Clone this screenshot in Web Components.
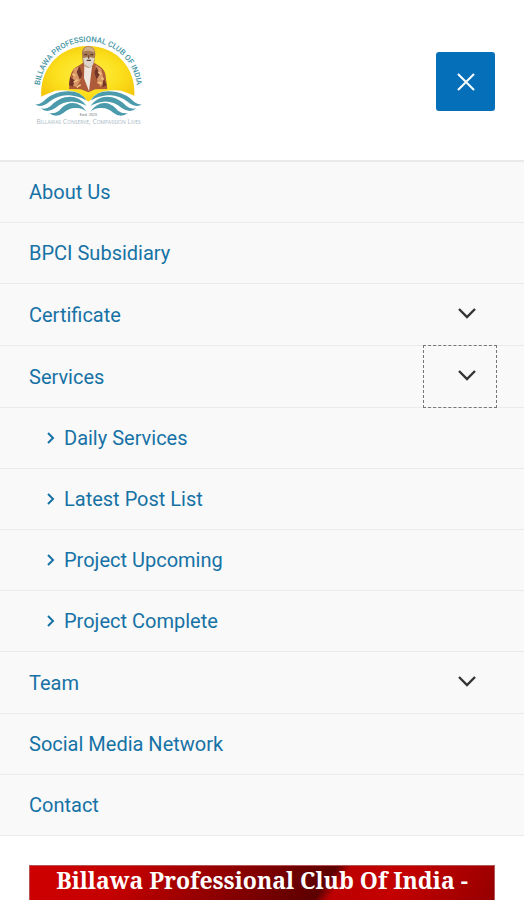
<!DOCTYPE html>
<html lang="en">
<head>
<meta charset="utf-8">
<meta name="viewport" content="width=device-width, initial-scale=1">
<title>Billawa Professional Club Of India</title>
<style>
body { margin: 0; background: #fff; font-family: Roboto, "Liberation Sans", sans-serif; }
</style>
</head>
<body>
<site-page></site-page>
<script>
const define = (name, html, setup) => customElements.define(name, class extends HTMLElement {
  connectedCallback() {
    if (this.shadowRoot) return;
    const root = this.attachShadow({ mode: 'open' });
    const t = document.createElement('template');
    t.innerHTML = html;
    root.append(t.content.cloneNode(true));
    if (setup) setup(this, root);
  }
});

define('club-logo', `
<style>
:host { display: block; }
a { display: block; }
svg { display: block; width: 130px; height: 105px; }
text { font-family: Roboto, sans-serif; }
</style>
<a href="#" aria-label="Billawa Professional Club Of India">
<svg viewBox="0 0 390 315">
  <defs>
    <path id="arc" d="M47 190 V184 A146 146 0 1 1 339 184 V190"/>
    <radialGradient id="sun" cx=".5" cy=".5" r=".6"><stop offset="0" stop-color="#fff04a"/><stop offset=".6" stop-color="#fbdf1c"/><stop offset="1" stop-color="#f5c60c"/></radialGradient>
  </defs>
  <path d="M52 205 C46 120 105 51 192 51 C278 51 338 118 331 205 Q244 172 193 218 Q142 172 52 205Z" fill="url(#sun)"/>
  <text font-size="23" font-weight="500" fill="#4294a3"><textPath href="#arc" startOffset="50%" text-anchor="middle">BILLAWA PROFESSIONAL CLUB OF INDIA</textPath></text>
  <path d="M135 180 L138 145 Q143 118 164 110 L179 100 L208 100 L229 113 Q245 124 246 149 L250 180 L214 181 L193 190 L170 181Z" fill="#ad5b38"/>
  <path d="M149 119 L163 113 L171 150 L158 173 L144 170Z M215 108 L232 120 L241 159 L229 174 L217 146Z" fill="#d99667"/>
  <path d="M138 144 l14 10 -5 19 -12 -4z M166 112 l9 23 -7 18 -10 -24z M218 113 l9 23 -9 16 -7 -22z M238 147 l10 22 -12 5z" fill="#713528"/>
  <path d="M145 135l9 5M149 160l12-8M158 175l12-8M223 129l9 7M220 160l13 3M232 146l7 6" stroke="#f4c783" stroke-width="5"/>
  <path d="M181 106 L205 105 L201 137 L195 187 L180 148Z" fill="#eee6df"/>
  <path d="M174 75 Q174 51 194 51 Q214 52 214 76 L211 98 Q205 115 194 116 Q181 114 176 98Z" fill="#a77a55"/>
  <path d="M178 68 Q180 52 195 53 Q210 54 212 70 Q194 62 178 68Z" fill="#d1ad88"/>
  <path d="M177 88 Q193 81 212 88 L207 107 Q195 123 181 106Z" fill="#ddd4cb"/>
  <path d="M181 77h9M199 77h9M188 94h13" stroke="#5b3b2a" stroke-width="4"/>
  <path d="M194 79v10" stroke="#795034" stroke-width="4"/>
  <path d="M188 218 Q170 178 94 185 Q66 194 36 212 Q86 199 127 201 Q160 202 188 218Z M198 218 Q216 178 292 185 Q322 194 353 212 Q302 199 261 201 Q226 202 198 218Z" fill="#fff"/>
  <g fill="#4b9bac">
    <path id="w1" d="M187 215 Q167 179 110 189 Q78 196 56 219 Q45 228 33 226 Q50 239 76 218 Q106 195 137 199 Q166 202 187 215Z"/>
    <path id="w2" d="M188 231 Q162 197 123 205 Q99 211 80 231 Q67 242 50 238 Q69 254 94 237 Q120 216 148 218 Q171 220 188 231Z"/>
    <path id="w3" d="M188 248 Q165 216 136 223 Q119 229 105 245 Q92 255 75 252 Q96 269 119 251 Q136 235 158 237 Q176 238 188 248Z"/>
    <use href="#w1" transform="matrix(-1 0 0 1 387 0)"/><use href="#w2" transform="matrix(-1 0 0 1 387 0)"/><use href="#w3" transform="matrix(-1 0 0 1 387 0)"/>
  </g>
  <text x="193" y="260" text-anchor="middle" font-size="11" fill="#777">Estd. 2020</text>
  <text x="194" y="284" text-anchor="middle" font-size="20" fill="#a9bac6" style="font-variant:small-caps;font-family:'Open Sans',sans-serif">Billawas Conserve, Compassion Lives</text>
</svg></a>`);

define('menu-toggle', `
<style>
:host { display: block; }
button { display: grid; place-items: center; width: 59px; height: 59px; padding: 0; border: 0; border-radius: 3px; background: #0570b9; color: #fff; }
svg { width: 20px; height: 20px; }
</style>
<button type="button" aria-label="Close menu" aria-expanded="true"><svg viewBox="0 0 20 20" fill="none" stroke="currentColor" stroke-width="2"><path d="M2 2 18 18M18 2 2 18"/></svg></button>`);

define('site-header', `
<style>
:host { display: flex; align-items: center; justify-content: space-between; padding: 29px 29px 26px 24px; border-bottom: 2px solid #e9e9e9; }
</style>
<club-logo></club-logo><menu-toggle></menu-toggle>`);

define('menu-item', `
<style>
:host { display: block; }
.row { display: flex; align-items: stretch; border-bottom: 1px solid #ebebeb; padding: 0 28px 0 29px; }
a { flex: 1; display: flex; align-items: center; gap: 8px; line-height: 60px; font-size: 20px; color: #1672a5; text-decoration: none; }
:host([sub]) .row { padding-left: 45px; }
.arrow { display: none; width: 11px; height: 14px; }
:host([sub]) .arrow { display: block; }
button { display: none; box-sizing: border-box; width: 72px; height: 61px; padding: 0 0 4px 14px; border: 0; background: none; color: #333; place-items: center; }
:host([parent]) button { display: grid; }
:host([current]) button { outline: 1px dashed #777; }
button svg { width: 20px; height: 12px; }
</style>
<div class="row"><a href="#"><svg class="arrow" viewBox="0 0 11 14" fill="none" stroke="currentColor" stroke-width="2"><path d="M3 2 8 7 3 12"/></svg><span></span></a><button type="button"><svg viewBox="0 0 20 12" fill="none" stroke="currentColor" stroke-width="2.4"><path d="M2 2 10 10 18 2"/></svg></button></div>
<slot></slot>`, (el, root) => {
  const label = el.getAttribute('label');
  root.querySelector('span').textContent = label;
  const b = root.querySelector('button');
  if (!el.hasAttribute('parent')) b.remove();
  else { b.setAttribute('aria-label', label + ' submenu'); b.setAttribute('aria-expanded', el.hasAttribute('current')); }
});

define('site-menu', `
<style>
:host { display: block; background: #f9f9f9; }
</style>
<nav aria-label="Main menu">
  <menu-item label="About Us"></menu-item>
  <menu-item label="BPCI Subsidiary"></menu-item>
  <menu-item label="Certificate" parent></menu-item>
  <menu-item label="Services" parent current>
    <menu-item label="Daily Services" sub></menu-item>
    <menu-item label="Latest Post List" sub></menu-item>
    <menu-item label="Project Upcoming" sub></menu-item>
    <menu-item label="Project Complete" sub></menu-item>
  </menu-item>
  <menu-item label="Team" parent></menu-item>
  <menu-item label="Social Media Network"></menu-item>
  <menu-item label="Contact"></menu-item>
</nav>`);

define('club-banner', `
<style>
:host { display: block; flex: 1; margin: 29px 29px 0; border: 1px solid #b45454; border-bottom: 0; background: linear-gradient(125deg, #cf0000 0%, #c50000 20%, #760000 52%, #5c0000 63%, #bd0000 66%, #c40000 78%, #950000 100%); }
h1 { margin: 0; text-align: center; color: #fff; font: bold 23px/28px "Noto Serif", "Droid Serif", "DejaVu Serif Condensed", "DejaVu Serif", serif; white-space: nowrap; }
</style>
<h1><slot></slot></h1>`);

define('site-page', `
<style>
:host { display: flex; flex-direction: column; min-height: 100vh; }
main { flex: 1; display: flex; flex-direction: column; }
</style>
<site-header></site-header>
<main><site-menu></site-menu><club-banner>Billawa Professional Club Of India -</club-banner></main>`);
</script>
</body>
</html>
